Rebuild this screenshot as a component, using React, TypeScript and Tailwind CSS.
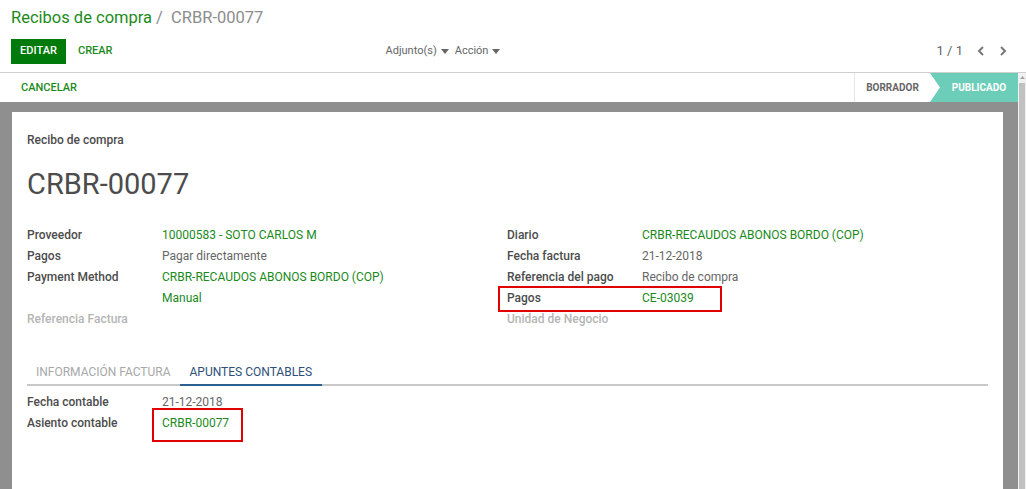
import React from 'react';

const green = 'text-[#1b8a1b]';

interface Field {
  label: string;
  value?: string;
  link?: boolean;
  muted?: boolean;
  boxed?: boolean;
}

const leftFields: Field[] = [
  { label: 'Proveedor', value: '10000583 - SOTO CARLOS M', link: true },
  { label: 'Pagos', value: 'Pagar directamente' },
  { label: 'Payment Method', value: 'CRBR-RECAUDOS ABONOS BORDO (COP)', link: true },
  { label: '', value: 'Manual', link: true },
  { label: 'Referencia Factura', muted: true },
];

const rightFields: Field[] = [
  { label: 'Diario', value: 'CRBR-RECAUDOS ABONOS BORDO (COP)', link: true },
  { label: 'Fecha factura', value: '21-12-2018' },
  { label: 'Referencia del pago', value: 'Recibo de compra' },
  { label: 'Pagos', value: 'CE-03039', link: true, boxed: true },
  { label: 'Unidad de Negocio', muted: true },
];

const FieldRow: React.FC<{ f: Field }> = ({ f }) => (
  <div className="relative grid grid-cols-[135px_1fr] h-[21px] items-center">
    <span className={f.muted ? 'font-medium text-[#b5b5b5]' : 'font-medium text-[#4c4c4c]'}>{f.label}</span>
    <span className={f.link ? green : 'text-[#666]'}>{f.value}</span>
    {f.boxed && (
      <span className="absolute left-[-9px] top-[-1px] w-[224px] h-[26px] border-2 border-[#e00000]" />
    )}
  </div>
);

const Caret = () => (
  <svg width="8" height="5" viewBox="0 0 8 5" className="ml-1 inline-block">
    <path d="M0 0h8L4 5z" fill="#666" />
  </svg>
);

export default function App() {
  return (
    <div className="w-[1026px] h-[489px] overflow-hidden bg-white flex flex-col text-[12px] [font-family:Roboto,'Liberation_Sans',sans-serif]">
      {/* control panel */}
      <div className="h-[73px] border-b border-[#cfcfcf] px-[11px] flex flex-col">
        <div className="h-[37px] flex items-center text-[16.5px]">
          <span className={green}>Recibos de compra</span>
          <span className="text-[#8c8c8c] ml-[4px]">/&nbsp; CRBR-00077</span>
        </div>
        <div className="flex items-center h-[26px] mt-[1px]">
          <button className="h-[25px] w-[55px] bg-[#007a0a] text-white text-[11px] font-medium">EDITAR</button>
          <span className={`ml-[12px] text-[11px] font-medium ${green}`}>CREAR</span>
          <div className="flex items-center text-[11px] text-[#666] ml-[273px]">
            <span>Adjunto(s)</span>
            <Caret />
            <span className="ml-[6px]">Acción</span>
            <Caret />
          </div>
          <div className="ml-auto mr-[8px] flex items-center gap-[14px] text-[13px] text-[#666]">
            <span>1 / 1</span>
            <svg width="8" height="10" viewBox="0 0 8 10"><path d="M6 1L2 5l4 4" stroke="#777" strokeWidth="2" fill="none" /></svg>
            <svg width="8" height="10" viewBox="0 0 8 10"><path d="M2 1l4 4-4 4" stroke="#777" strokeWidth="2" fill="none" /></svg>
          </div>
        </div>
      </div>

      <div className="flex flex-1 min-h-0">
        <div className="flex-1 flex flex-col min-w-0">
          {/* status bar */}
          <div className="h-[29px] flex items-center">
            <span className={`ml-[21px] mt-[2px] text-[11px] font-medium ${green}`}>CANCELAR</span>
            <div className="ml-auto flex h-full">
              <div className="w-[76px] border-l border-[#e6e6e6] flex items-center justify-center text-[10px] font-bold text-[#666]">
                BORRADOR
              </div>
              <div className="relative w-[88px] bg-[#6ccdb9] flex items-center justify-center pl-[10px] text-[10px] font-bold text-white">
                <svg className="absolute left-0 top-0" width="10" height="29" viewBox="0 0 10 29">
                  <path d="M0 0L10 14.5L0 29z" fill="#fff" />
                </svg>
                PUBLICADO
              </div>
            </div>
          </div>

          {/* sheet background */}
          <div className="flex-1 bg-[#8f8f8f] pt-[10px] pl-[12px] pr-[15px]">
            <div className="bg-white h-full px-[15px] pt-[22px]">
              <div className="text-[12px] font-medium text-[#4c4c4c] h-[13px] leading-[13px]">Recibo de compra</div>
              <div className="mt-[19px] text-[29px] text-[#4c4c4c] leading-[36px]">CRBR-00077</div>

              <div className="mt-[22px] grid grid-cols-[480px_1fr]">
                <div>
                  {leftFields.map((f, i) => (
                    <FieldRow key={i} f={f} />
                  ))}
                </div>
                <div>
                  {rightFields.map((f, i) => (
                    <FieldRow key={i} f={f} />
                  ))}
                </div>
              </div>

              {/* tabs */}
              <div className="mt-[31px] flex border-b-2 border-[#c8c8c8] h-[26px] text-[12px]">
                <div className="px-[9px] flex items-center text-[#a8a8a8]">INFORMACIÓN FACTURA</div>
                <div className="px-[10px] flex items-center text-[#2d4f7a] border-b-2 border-[#2d5f93] -mb-[2px]">
                  APUNTES CONTABLES
                </div>
              </div>

              <div className="mt-[5px]">
                <FieldRow f={{ label: 'Fecha contable', value: '21-12-2018' }} />
                <div className="relative grid grid-cols-[135px_1fr] h-[21px] items-center">
                  <span className="font-medium text-[#4c4c4c]">Asiento contable</span>
                  <span className={green}>CRBR-00077</span>
                  <span className="absolute left-[125px] top-[-4px] w-[91px] h-[34px] border-2 border-[#e00000]" />
                </div>
              </div>
            </div>
          </div>
        </div>

        {/* scrollbar */}
        <div className="w-[8px] flex flex-col bg-[#f1f1f1]">
          <div className="h-[10px] flex items-start justify-center pt-[3px]">
            <svg width="5" height="3" viewBox="0 0 5 3"><path d="M0 3L2.5 0L5 3z" fill="#a3a3a3" /></svg>
          </div>
          <div className="flex-1 mx-[1px] bg-[#c1c1c1]" />
        </div>
      </div>
    </div>
  );
}
